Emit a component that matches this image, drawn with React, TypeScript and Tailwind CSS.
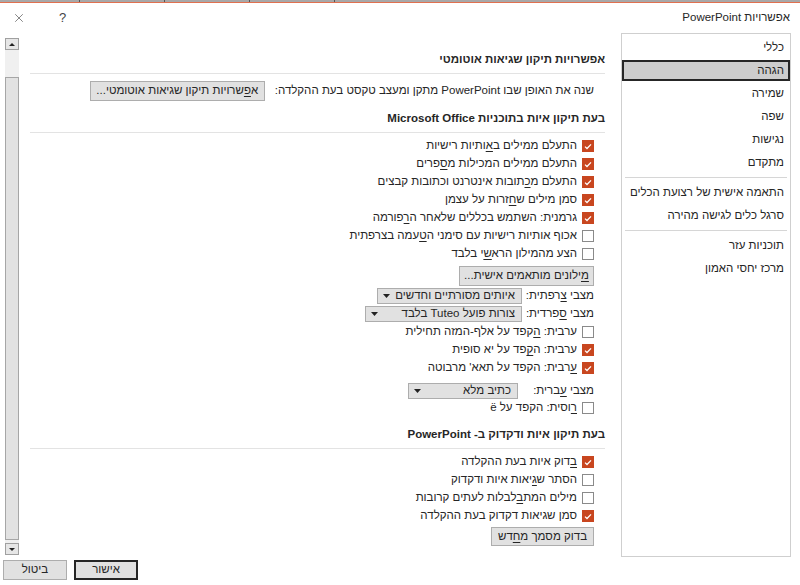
import React from "react";
import { X } from "lucide-react";

type Item = { text: React.ReactNode; checked: boolean };

function CheckBox({ checked }: { checked: boolean }) {
  if (checked) {
    return (
      <span className="w-[12px] h-[12px] bg-[#c8461f] flex items-center justify-center shrink-0">
        <svg width="8" height="7" viewBox="0 0 8 7">
          <path d="M1 3.6 L3 5.5 L7 1.4" stroke="white" strokeWidth="1.3" fill="none" />
        </svg>
      </span>
    );
  }
  return <span className="w-[12px] h-[12px] border border-[#8a8a8a] bg-white shrink-0" />;
}

function CheckRow({ text, checked }: Item) {
  return (
    <div className="flex items-center h-[18px] gap-[5px] pr-[11px]">
      <CheckBox checked={checked} />
      <span className="whitespace-nowrap">{text}</span>
    </div>
  );
}

function Button({ children, w, h = "h-[20px]" }: { children: React.ReactNode; w: string; h?: string }) {
  return (
    <div className={`${w} ${h} bg-[#e1e1e1] border border-[#adadad] flex items-center justify-center whitespace-nowrap`}>
      {children}
    </div>
  );
}

function Dropdown({ label, value, labelW, boxW }: { label: React.ReactNode; value: string; labelW: string; boxW: string }) {
  return (
    <div className="flex items-center h-[16px] pr-[11px]">
      <span className={`${labelW} whitespace-nowrap`}>{label}</span>
      <div className={`${boxW} h-[16px] bg-[#e1e1e1] border border-[#adadad] flex items-center justify-between pr-[6px] pl-[5px] gap-[4px] overflow-hidden`}>
        <span className="whitespace-nowrap">{value}</span>
        <svg width="7" height="4" viewBox="0 0 7 4" className="shrink-0">
          <path d="M0 0 H7 L3.5 4 Z" fill="#222" />
        </svg>
      </div>
    </div>
  );
}

function Heading({ children }: { children: React.ReactNode }) {
  return (
    <div className="h-[25px] border-b border-[#e3e3e3] leading-[20px] font-bold whitespace-nowrap">
      {children}
    </div>
  );
}

const navTop = ["כללי", "הגהה", "שמירה", "שפה", "נגישות", "מתקדם"];
const navMid = ["התאמה אישית של רצועת הכלים", "סרגל כלים לגישה מהירה"];
const navBottom = ["תוכניות עזר", "מרכז יחסי האמון"];

function NavRow({ label }: { label: string }) {
  const selected = label === "הגהה";
  return (
    <div className="h-[23px] flex items-center">
      {selected ? (
        <div className="w-full h-[21px] bg-[#cdcdcd] border-2 border-[#262626] flex items-center pr-[4px]">{label}</div>
      ) : (
        <div className="pr-[6px]">{label}</div>
      )}
    </div>
  );
}

export default function App() {
  const u = (s: string) => <u className="underline underline-offset-2">{s}</u>;

  const office: Item[] = [
    { text: <>התעלם ממילים ב{u("א")}ותיות רישיות</>, checked: true },
    { text: <>התעלם ממילים המכילות מ{u("ס")}פרים</>, checked: true },
    { text: <>התעלם מ{u("כ")}תובות אינטרנט וכתובות קבצים</>, checked: true },
    { text: <>סמן מילים ש{u("ח")}זרות על עצמן</>, checked: true },
    { text: <>גרמנית: השתמש בכללים שלאחר ה{u("ר")}פורמה</>, checked: true },
    { text: <>אכוף אותיות רישיות עם סימני ה{u("ט")}עמה בצרפתית</>, checked: false },
    { text: <>הצע מהמילון הרא{u("ש")}י בלבד</>, checked: false },
  ];

  const arabic: Item[] = [
    { text: <>ערבית: {u("ה")}קפד על אלף-המזה תחילית</>, checked: false },
    { text: <>ערבית: ה{u("ק")}פד על יא סופית</>, checked: true },
    { text: <>{u("ע")}רבית: הקפד על תאא' מרבוטה</>, checked: true },
  ];

  const ppt: Item[] = [
    { text: <>{u("ב")}דוק איות בעת ההקלדה</>, checked: true },
    { text: <>הסתר ש{u("ג")}יאות איות ודקדוק</>, checked: false },
    { text: <>מילים המת{u("ב")}לבלות לעתים קרובות</>, checked: false },
    { text: <>סמן שגיאות דקדוק בעת ההקלדה</>, checked: true },
  ];

  return (
    <div
      dir="rtl"
      className="w-[800px] h-[585px] bg-white flex flex-col overflow-hidden text-[11.5px] text-[#262626] font-['Liberation_Sans','DejaVu_Sans',sans-serif]"
    >
      {/* top strip */}
      <div className="h-[2px] bg-[#a8a8a8] flex justify-end">
        <div className="flex gap-[84px] pl-[79px]" dir="ltr">
          <span className="w-px h-[2px] bg-[#555]" />
          <span className="w-px h-[2px] bg-[#555]" />
          <span className="w-px h-[2px] bg-[#555]" />
          <span className="w-px h-[2px] bg-[#555]" />
        </div>
      </div>
      <div className="h-[1px] bg-[#e0704f]" />

      {/* title row */}
      <div className="h-[30px] flex items-center justify-between pr-[10px] pl-[12px]">
        <span className="whitespace-nowrap">אפשרויות PowerPoint</span>
        <div className="flex items-center gap-[33px] text-[#444]">
          <span className="text-[13px] font-light">?</span>
          <X size={14} strokeWidth={1.1} />
        </div>
      </div>

      {/* main */}
      <div className="h-[524px] flex pr-[9px] pl-[5px]">
        {/* nav */}
        <div className="w-[170px] h-full border border-[#cfcfcf] pt-[2px] shrink-0">
          {navTop.map((l) => (
            <NavRow key={l} label={l} />
          ))}
          <div className="h-px bg-[#d6d6d6] mx-[3px] my-[3px]" />
          {navMid.map((l) => (
            <NavRow key={l} label={l} />
          ))}
          <div className="h-px bg-[#d6d6d6] mx-[3px] my-[3px]" />
          {navBottom.map((l) => (
            <NavRow key={l} label={l} />
          ))}
        </div>

        {/* content */}
        <div className="flex-1 pr-[16px] pl-[11px] flex flex-col">
          <div className="mt-[16px]">
            <Heading>אפשרויות תיקון שגיאות אוטומטי</Heading>
          </div>
          <div className="mt-[7px] h-[20px] flex items-center gap-[10px] pr-[11px]">
            <span className="whitespace-nowrap">שנה את האופן שבו PowerPoint מתקן ומעצב טקסט בעת ההקלדה:</span>
            <Button w="w-[175px]">א{u("פ")}שרויות תיקון שגיאות אוטומטי...</Button>
          </div>

          <div className="mt-[7px]">
            <Heading>בעת תיקון איות בתוכניות Microsoft Office</Heading>
          </div>
          <div className="mt-[4px]">
            {office.map((it, i) => (
              <CheckRow key={i} {...it} />
            ))}
          </div>
          <div className="mt-[3px] pr-[11px] flex">
            <Button w="w-[135px]">{u("מ")}ילונים מותאמים אישית...</Button>
          </div>
          <div className="mt-[2px] flex flex-col gap-[2px]">
            <Dropdown label={<>מצבי {u("צ")}רפתית:</>} value="איותים מסורתיים וחדשים" labelW="w-[72px]" boxW="w-[145px]" />
            <Dropdown label={<>מצבי {u("ס")}פרדית:</>} value="צורות פועל Tuteo בלבד" labelW="w-[72px]" boxW="w-[157px]" />
          </div>
          <div className="mt-[1px]">
            {arabic.map((it, i) => (
              <CheckRow key={i} {...it} />
            ))}
          </div>
          <div className="mt-[6px]">
            <Dropdown label={<>מצבי {u("ע")}ברית:</>} value="כתיב מלא" labelW="w-[76px]" boxW="w-[110px]" />
          </div>
          <CheckRow text={<>{u("ר")}וסית: הקפד על ë</>} checked={false} />

          <div className="mt-[7px]">
            <Heading>בעת תיקון איות ודקדוק ב- PowerPoint</Heading>
          </div>
          <div className="mt-[4px]">
            {ppt.map((it, i) => (
              <CheckRow key={i} {...it} />
            ))}
          </div>
          <div className="mt-[2px] pr-[11px] flex">
            <Button w="w-[103px]" h="h-[19px]">בדוק מסמך מ{u("ח")}דש</Button>
          </div>
        </div>

        {/* scrollbar */}
        <div className="w-[14px] mt-[5px] h-[517px] flex flex-col bg-[#f0f0f0] shrink-0">
          <div className="h-[12px] border border-[#a0a0a0] bg-[#e6e6e6] flex items-center justify-center">
            <svg width="6" height="3" viewBox="0 0 6 3">
              <path d="M0 3 H6 L3 0 Z" fill="#222" />
            </svg>
          </div>
          <div className="h-[27px]" />
          <div className="flex-1 border border-[#a6a6a6] bg-[#e2e2e2]" />
          <div className="h-[3px]" />
          <div className="h-[12px] border border-[#a0a0a0] bg-[#e6e6e6] flex items-center justify-center">
            <svg width="6" height="3" viewBox="0 0 6 3">
              <path d="M0 0 H6 L3 3 Z" fill="#222" />
            </svg>
          </div>
        </div>
      </div>

      {/* bottom buttons */}
      <div className="mt-[3px] flex justify-end gap-[7px] pl-[3px]">
        <div className="w-[64px] h-[20px] bg-[#e1e1e1] border-2 border-[#262626] flex items-center justify-center">אישור</div>
        <div className="w-[64px] h-[20px] bg-[#e1e1e1] border border-[#adadad] flex items-center justify-center">ביטול</div>
      </div>
    </div>
  );
}
